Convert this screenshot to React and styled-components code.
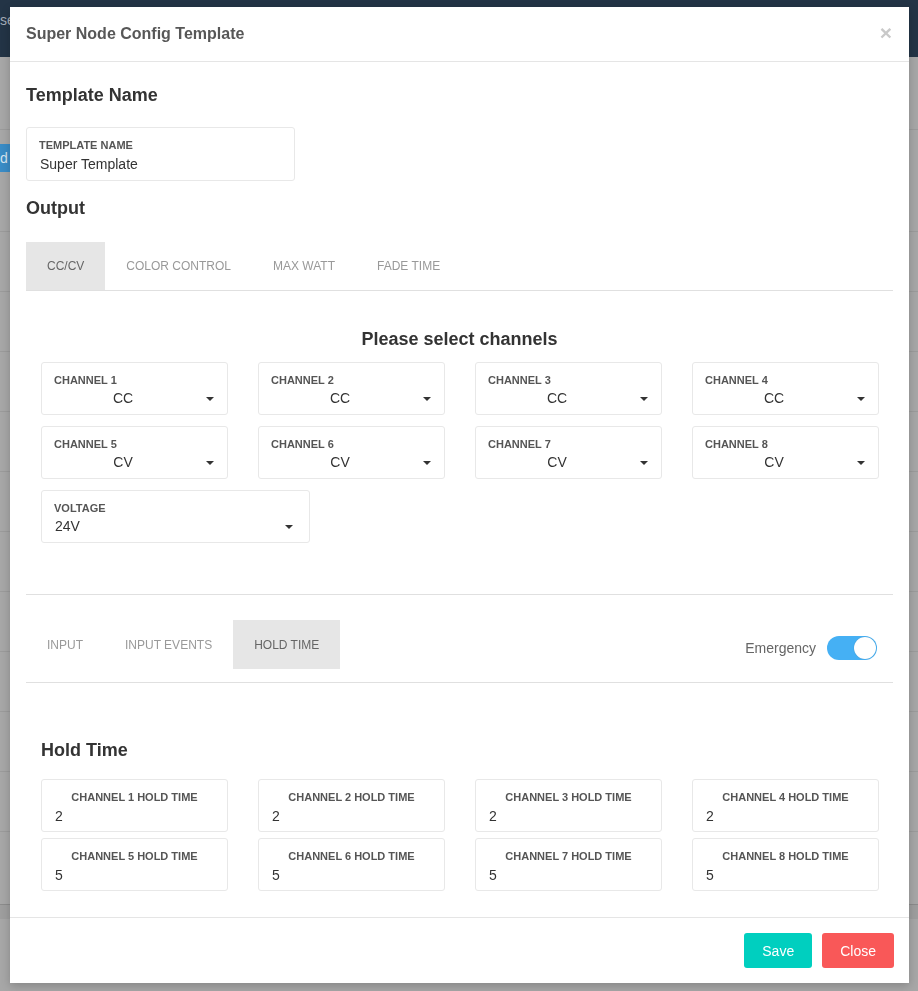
import React from 'react';
import styled, { createGlobalStyle } from 'styled-components';

const Global = createGlobalStyle`
  html, body { margin: 0; padding: 0; }
  body {
    font-family: "Liberation Sans", Arial, Helvetica, sans-serif;
    background: #a7a7a7;
    overflow: hidden;
  }
  * { box-sizing: border-box; }
`;

/* ---------- background page (dimmed) ---------- */
const Page = styled.div`
  min-height: 991px;
  background: #a7a7a7;
`;
const TopBar = styled.div`
  height: 57px;
  background: #233446;
  color: #a3adb8;
  font-size: 14px;
  padding-top: 12px;
`;
const BgBand = styled.div`
  height: ${p => p.$h}px;
  border-bottom: 1px solid #9b9b9b;
  display: flex;
  align-items: flex-start;
`;
const BgButton = styled.div`
  margin-top: 14px;
  width: 10px;
  height: 28px;
  background: #3a8cc6;
  color: #d6e4ef;
  font-size: 14px;
  line-height: 28px;
  overflow: hidden;
`;
const BgFooter = styled.div`
  margin-top: 72px;
  height: 15px;
  border-top: 1px solid #8c8c8c;
  background: #9e9e9e;
`;

/* ---------- modal ---------- */
const Overlay = styled.div`
  position: fixed;
  inset: 0;
  padding: 7px 0 0 10px;
`;
const Modal = styled.div`
  width: 899px;
  background: #fff;
  box-shadow: 0 3px 9px rgba(0, 0, 0, 0.2);
`;
const Header = styled.div`
  height: 55px;
  border-bottom: 1px solid #e5e5e5;
  display: flex;
  align-items: center;
  justify-content: space-between;
  padding: 0 16px 0 16px;
`;
const Title = styled.div`
  font-size: 16px;
  font-weight: bold;
  color: #575757;
`;
const CloseX = styled.div`
  font-size: 21px;
  font-weight: bold;
  color: #c9c9c9;
  line-height: 1;
  margin-right: 1px;
  margin-top: -3px;
`;
const Body = styled.div`
  padding: 0 16px 26px;
`;
const Heading = styled.div`
  font-size: 18px;
  line-height: 22px;
  font-weight: bold;
  color: #333;
  margin-top: ${p => p.$mt}px;
  padding-left: ${p => p.$pl || 0}px;
`;
const CenterHeading = styled.div`
  font-size: 18px;
  line-height: 20px;
  font-weight: bold;
  color: #333;
  text-align: center;
  margin-top: 38px;
`;
const Field = styled.div`
  width: ${p => (p.$w ? p.$w + 'px' : 'auto')};
  height: ${p => p.$h || 53}px;
  border: 1px solid #e8e8e8;
  border-radius: 3px;
  padding: 10px 12px 0 12px;
  margin-top: ${p => p.$mt || 0}px;
`;
const Label = styled.div`
  font-size: 11px;
  line-height: 14px;
  font-weight: bold;
  color: #555;
  text-transform: uppercase;
  text-align: ${p => (p.$center ? 'center' : 'left')};
`;
const Value = styled.div`
  font-size: 14px;
  line-height: 20px;
  color: #333;
  margin-top: 2px;
  padding-left: 1px;
`;
const SelectRow = styled.div`
  display: flex;
  align-items: center;
  font-size: 14px;
  line-height: 20px;
  color: #333;
  margin-top: 1px;
`;
const SelectValue = styled.div`
  flex: 1;
  text-align: ${p => (p.$center ? 'center' : 'left')};
  padding-left: 1px;
`;
const CaretBox = styled.div`
  width: 24px;
  display: flex;
  justify-content: flex-end;
  padding-right: ${p => p.$pr || 0}px;
`;
const Caret = styled.span`
  width: 0;
  height: 0;
  border-left: 4px solid transparent;
  border-right: 4px solid transparent;
  border-top: 4px solid #333;
  margin-top: 1px;
`;
const Tabs = styled.div`
  display: flex;
  align-items: flex-start;
  border-bottom: 1px solid #e0e0e0;
  height: ${p => p.$h}px;
  margin-top: ${p => p.$mt}px;
`;
const Tab = styled.div`
  height: ${p => p.$h}px;
  padding: 0 21px;
  display: flex;
  align-items: center;
  font-size: 12px;
  text-transform: uppercase;
  color: ${p => (p.$active ? '#666' : '#999')};
  background: ${p => (p.$active ? '#e6e6e6' : 'transparent')};
`;
const Spacer = styled.div`
  flex: 1;
`;
const ToggleWrap = styled.div`
  display: flex;
  align-items: center;
  gap: 11px;
  margin-top: 16px;
  margin-right: 16px;
  font-size: 14px;
  color: #666;
`;
const Track = styled.div`
  width: 50px;
  height: 24px;
  border-radius: 12px;
  background: ${p => (p.$on ? '#45b0f4' : '#ccc')};
  display: flex;
  align-items: center;
  justify-content: ${p => (p.$on ? 'flex-end' : 'flex-start')};
  padding: 0 1px;
`;
const Knob = styled.div`
  width: 22px;
  height: 22px;
  border-radius: 50%;
  background: #fff;
  box-shadow: 0 0 1px rgba(0, 0, 0, 0.25);
`;
const Grid = styled.div`
  display: grid;
  grid-template-columns: repeat(4, 1fr);
  column-gap: 30px;
  row-gap: ${p => p.$rg}px;
  padding: 0 14px 0 15px;
  margin-top: ${p => p.$mt}px;
`;
const Inset = styled.div`
  padding: 0 15px;
  margin-top: 11px;
`;
const Divider = styled.div`
  border-top: 1px solid #e0e0e0;
  margin-top: 51px;
`;
const Footer = styled.div`
  border-top: 1px solid #e5e5e5;
  padding: 15px 15px 15px;
  display: flex;
  justify-content: flex-end;
  gap: 10px;
`;
const Button = styled.button`
  height: 35px;
  padding: 0 ${p => p.$px}px;
  border: none;
  border-radius: 3px;
  background: ${p => p.$bg};
  color: #fff;
  font-family: inherit;
  font-size: 14px;
`;

const channels = ['CC', 'CC', 'CC', 'CC', 'CV', 'CV', 'CV', 'CV'];
const holds = [2, 2, 2, 2, 5, 5, 5, 5];

function ChannelSelect({ n, value }) {
  return (
    <Field>
      <Label>Channel {n}</Label>
      <SelectRow>
        <SelectValue $center>{value}</SelectValue>
        <CaretBox $pr={1}>
          <Caret />
        </CaretBox>
      </SelectRow>
    </Field>
  );
}

export default function App() {
  return (
    <>
      <Global />
      <Page>
        <TopBar>se</TopBar>
        <BgBand $h={73} />
        <BgBand $h={102}>
          <BgButton>d</BgButton>
        </BgBand>
        {Array.from({ length: 10 }).map((_, i) => (
          <BgBand key={i} $h={60} />
        ))}
        <BgFooter />
      </Page>
      <Overlay>
        <Modal>
          <Header>
            <Title>Super Node Config Template</Title>
            <CloseX>×</CloseX>
          </Header>
          <Body>
            <Heading $mt={22}>Template Name</Heading>
            <Field $w={269} $h={54} $mt={21}>
              <Label>Template Name</Label>
              <Value>Super Template</Value>
            </Field>
            <Heading $mt={16}>Output</Heading>
            <Tabs $h={49} $mt={23}>
              <Tab $h={48} $active>CC/CV</Tab>
              <Tab $h={48}>Color Control</Tab>
              <Tab $h={48}>Max Watt</Tab>
              <Tab $h={48}>Fade Time</Tab>
            </Tabs>
            <CenterHeading>Please select channels</CenterHeading>
            <Grid $rg={11} $mt={13}>
              {channels.map((v, i) => (
                <ChannelSelect key={i} n={i + 1} value={v} />
              ))}
            </Grid>
            <Inset>
              <Field $w={269}>
                <Label>Voltage</Label>
                <SelectRow>
                  <SelectValue>24V</SelectValue>
                  <CaretBox $pr={4}>
                    <Caret />
                  </CaretBox>
                </SelectRow>
              </Field>
            </Inset>
            <Divider />
            <Tabs $h={63} $mt={25}>
              <Tab $h={49}>Input</Tab>
              <Tab $h={49}>Input Events</Tab>
              <Tab $h={49} $active>Hold Time</Tab>
              <Spacer />
              <ToggleWrap>
                Emergency
                <Track $on>
                  <Knob />
                </Track>
              </ToggleWrap>
            </Tabs>
            <Heading $mt={56} $pl={15}>Hold Time</Heading>
            <Grid $rg={6} $mt={18}>
              {holds.map((v, i) => (
                <Field key={i}>
                  <Label $center>Channel {i + 1} Hold Time</Label>
                  <Value>{v}</Value>
                </Field>
              ))}
            </Grid>
          </Body>
          <Footer>
            <Button $bg="#00cfbf" $px={18}>Save</Button>
            <Button $bg="#f95858" $px={18}>Close</Button>
          </Footer>
        </Modal>
      </Overlay>
    </>
  );
}
